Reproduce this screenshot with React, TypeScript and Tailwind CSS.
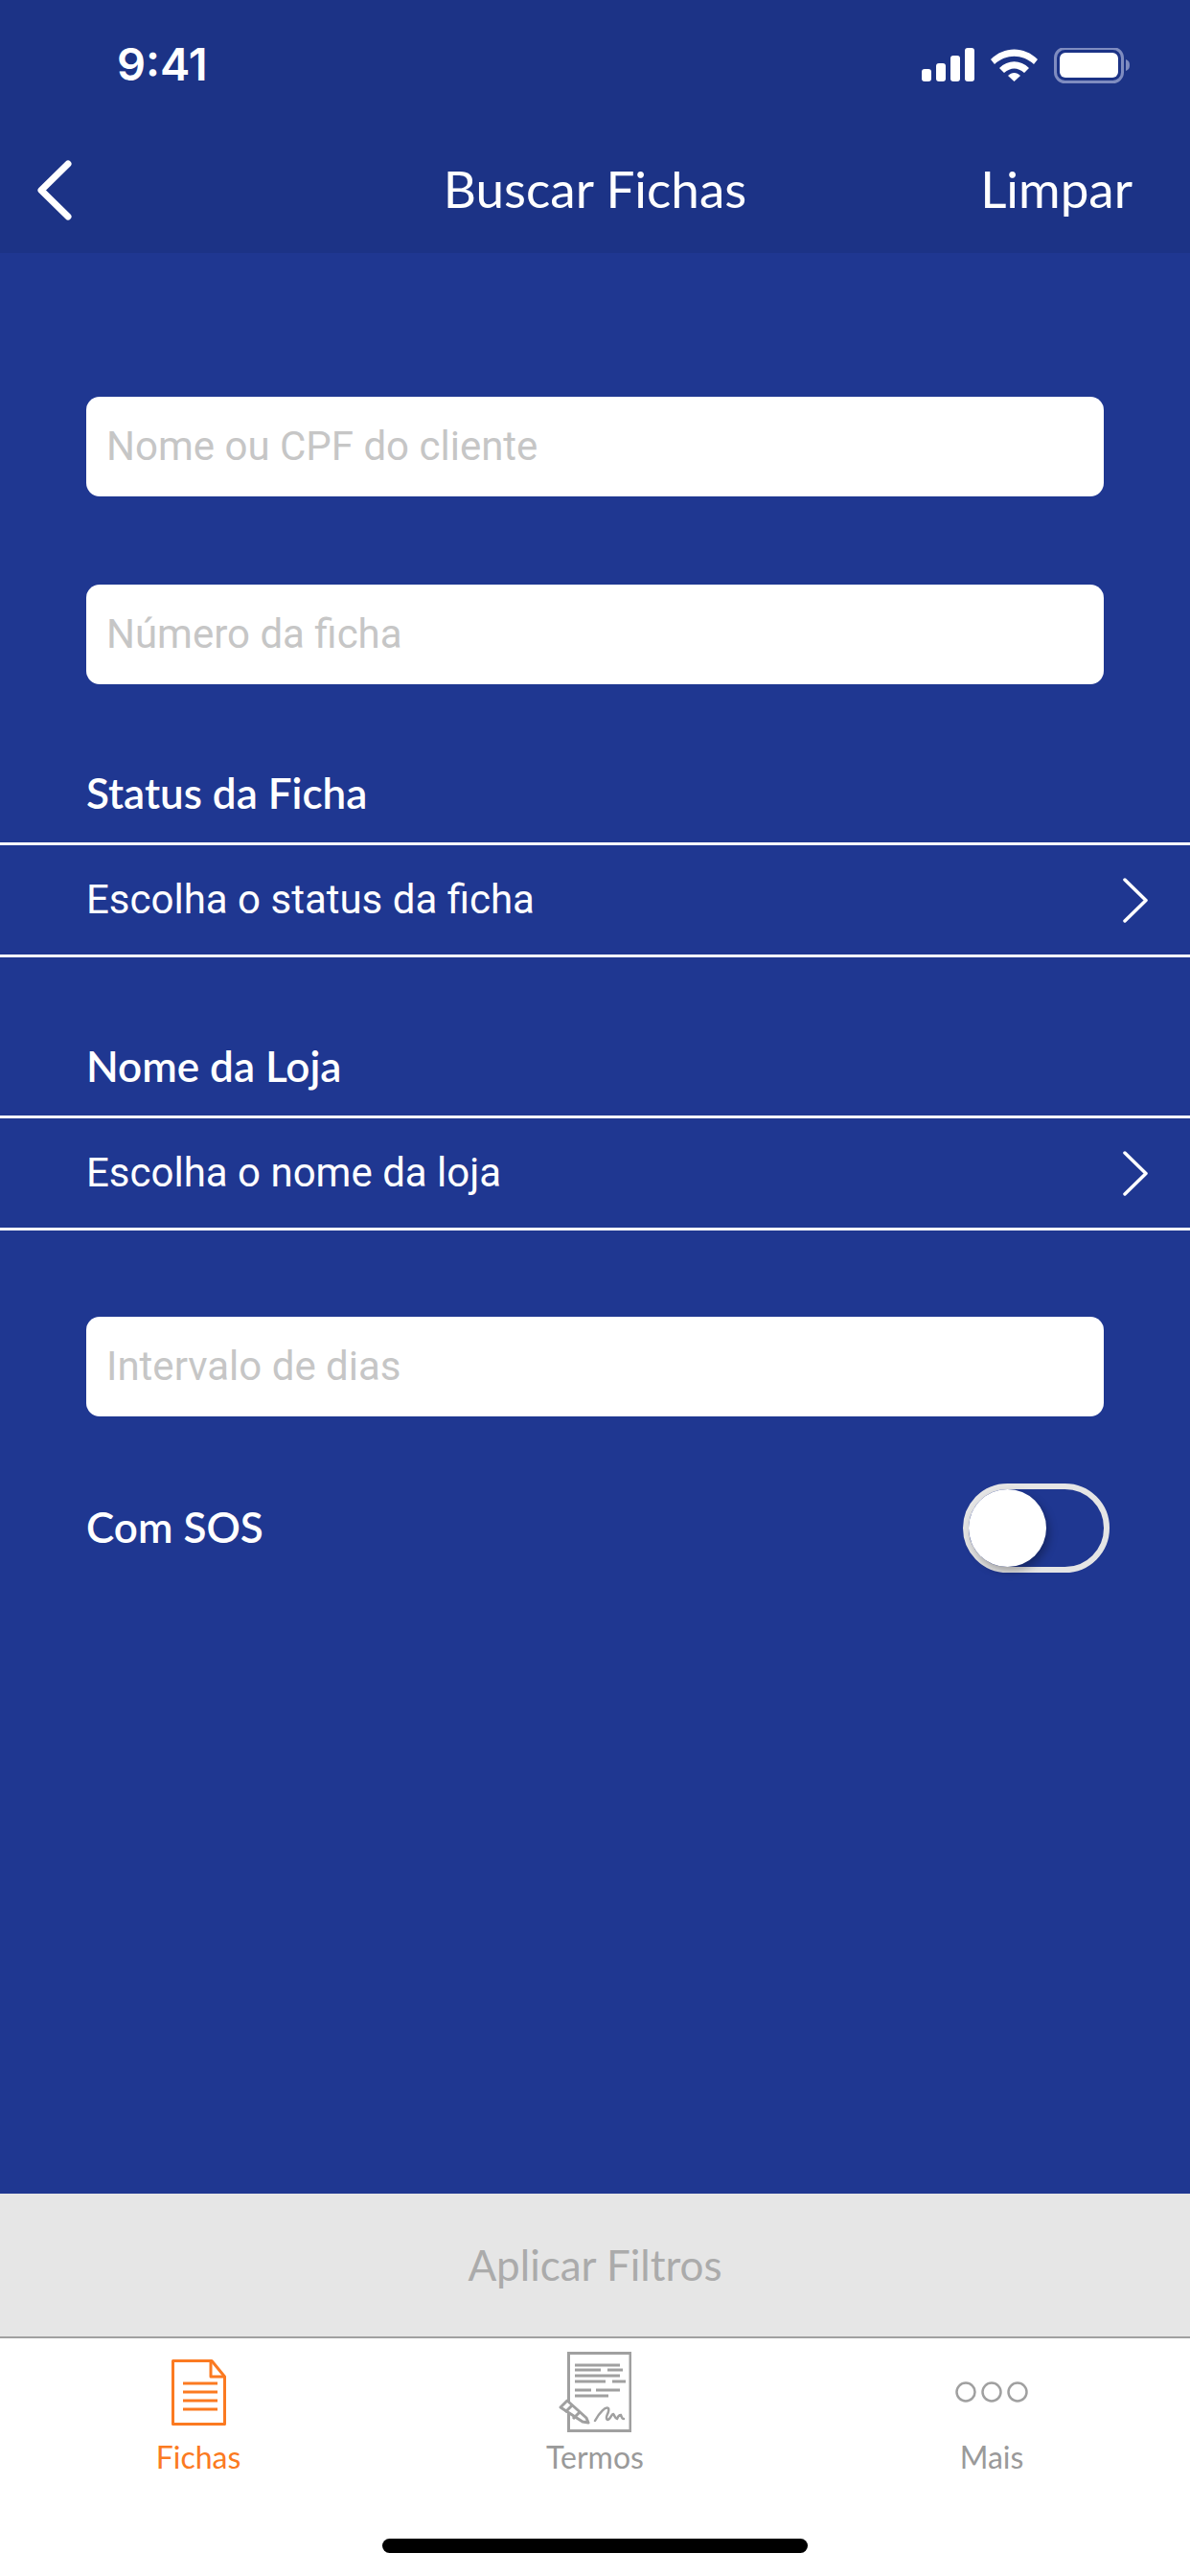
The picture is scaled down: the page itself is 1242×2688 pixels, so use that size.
// ─── Status bar ───────────────────────────────────────────────────────────────

function StatusIcons() {
	return (
		<svg width="220" height="40" viewBox="0 0 220 40" fill="none" className="shrink-0">
			<rect x="0" y="22" width="10" height="13" rx="3" fill="#fff" />
			<rect x="15" y="16" width="10" height="19" rx="3" fill="#fff" />
			<rect x="30" y="8" width="10" height="27" rx="3" fill="#fff" />
			<rect x="45" y="0" width="10" height="35" rx="3" fill="#fff" />
			<path d="M72 12 C86 -2 107 -2 121 12 L117 17 C105 6 88 6 76 17 Z" fill="#fff" />
			<path d="M81 21 C90 12 103 12 112 21 L107 26 C100 20 93 20 86 26 Z" fill="#fff" />
			<path d="M90 29 C94 25 99 25 103 29 L96.500 35 Z" fill="#fff" />
			<rect x="139.500" y="0.500" width="70" height="35" rx="10" stroke="#7f8cc0" strokeWidth="3" />
			<rect x="144" y="5" width="61" height="26" rx="6" fill="#fff" />
			<path d="M213 12 C216 13 217 15 217 18 C217 21 216 23 213 24 Z" fill="#7f8cc0" />
		</svg>
	);
}

// ─── Form pieces ──────────────────────────────────────────────────────────────

function TextField({ placeholder, className }: { placeholder: string; className: string }) {
	return (
		<input
			type="text"
			placeholder={placeholder}
			className={`block mx-[90px] w-[1062px] h-[104px] shrink-0 rounded-[14px] bg-white pl-[21px] pr-[21px] pb-[2px] font-['Roboto',sans-serif] text-[42px] text-gray-800 outline-none placeholder:text-[#c6c6c6] ${className}`}
		/>
	);
}

function PickerRow({ label, value, className }: { label: string; value: string; className: string }) {
	return (
		<section className={className}>
			<h2 className="h-[64px] px-[90px] flex items-center font-['Lato',sans-serif] font-semibold text-[44px] text-white">
				{label}
			</h2>
			<div className="mt-[20px] h-[120px] flex items-center justify-between border-y-[3px] border-white pl-[90px] pr-[43px]">
				<span className="pb-[2px] font-['Roboto',sans-serif] text-[42px] text-white">{value}</span>
				<svg width="27" height="47" viewBox="0 0 27 47" fill="none">
					<path d="M2 2 L24 23.500 L2 45" stroke="#fff" strokeWidth="3.500" strokeLinecap="round" strokeLinejoin="round" />
				</svg>
			</div>
		</section>
	);
}

// ─── Tab bar icons ────────────────────────────────────────────────────────────

function FichasIcon() {
	return (
		<svg width="57" height="69" viewBox="0 0 57 69" fill="none" stroke="#fb7a21" strokeWidth="3">
			<path d="M1.500 1.500 H42 L55.500 18 V67.500 H1.500 Z" strokeLinejoin="round" />
			<path d="M41 1.500 V18 H55.500" strokeLinejoin="round" />
			<path d="M12 25 H48 M12 34 H48 M12 43 H48 M12 52 H48" />
		</svg>
	);
}

function TermosIcon() {
	return (
		<svg width="76" height="84" viewBox="0 0 76 84" fill="none" stroke="#a0a0a0" strokeWidth="3">
			<path d="M10.500 1.500 H75 V82.500 H10.500 Z" />
			<path d="M17 14 H64 M17 19 H44 M51 19 H67 M17 25 H64 M17 31 H49 M56 31 H70 M17 40 H34 M39 40 H64 M17 46 H52" />
			<path d="M2 58 L9 51 L29 69 L31 74 L25 73 Z" fill="#fff" strokeLinejoin="round" />
			<path d="M7 63 L14 56 M15 70 L22 63" />
			<path d="M38 72 C43 63 49 57 52 59 C54 63 47 69 51 71 C54 71 55 65 57 65 C59 67 59 70 61 70 C62 67 63 66 65 66 C66 68 66 70 68 70" strokeWidth="2.500" strokeLinecap="round" />
		</svg>
	);
}

function MaisIcon() {
	return (
		<svg width="76" height="22" viewBox="0 0 76 22" fill="none" stroke="#a0a0a0" strokeWidth="2.500">
			<circle cx="11" cy="11" r="9.500" />
			<circle cx="38" cy="11" r="9.500" />
			<circle cx="65" cy="11" r="9.500" />
		</svg>
	);
}

function Tab({ label, active, children }: { label: string; active?: boolean; children: React.ReactNode }) {
	return (
		<div className="w-[414px] flex flex-col items-center">
			<div className="h-[106px] pt-[6px] flex items-center justify-center">{children}</div>
			<span className={`font-['Lato',sans-serif] text-[32px] leading-[36px] ${active ? 'text-[#fb7a21]' : 'text-[#9a9a9a]'}`}>
				{label}
			</span>
		</div>
	);
}

// ─── Page ─────────────────────────────────────────────────────────────────────

export default function App() {
	return (
		<div className="w-[1242px] h-[2688px] flex flex-col bg-[#1f3791] overflow-hidden">
			<header className="h-[264px] shrink-0 bg-[#1c3386]">
				<div className="h-[134px] flex items-start justify-between pt-[44px] pl-[122px] pr-[60px]">
					<span className="font-['Inter',sans-serif] font-semibold text-[47px] leading-[46px] text-white">9:41</span>
					<div className="pt-[6px]"><StatusIcons /></div>
				</div>
				<div className="relative h-[130px] flex items-start justify-center">
					<button type="button" aria-label="Voltar" className="absolute left-[38px] top-[33px]">
						<svg width="37" height="63" viewBox="0 0 37 63" fill="none">
							<path d="M33 4 L5 31.500 L33 59" stroke="#fff" strokeWidth="7" strokeLinecap="round" strokeLinejoin="round" />
						</svg>
					</button>
					<h1 className="pt-[33px] font-['Lato',sans-serif] text-[53px] leading-[60px] text-white">Buscar Fichas</h1>
					<span className="absolute right-[60px] top-[33px] font-['Lato',sans-serif] text-[53px] leading-[60px] text-white">Limpar</span>
				</div>
			</header>

			<main className="flex-1 flex flex-col pt-[150px]">
				<TextField placeholder="Nome ou CPF do cliente" className="" />
				<TextField placeholder="Número da ficha" className="mt-[92px]" />
				<PickerRow label="Status da Ficha" value="Escolha o status da ficha" className="mt-[81px]" />
				<PickerRow label="Nome da Loja" value="Escolha o nome da loja" className="mt-[81px]" />
				<TextField placeholder="Intervalo de dias" className="mt-[90px]" />
				<div className="mt-[70px] pl-[90px] pr-[84px] flex items-center justify-between">
					<span className="pb-[4px] font-['Lato',sans-serif] font-semibold text-[44px] text-white">Com SOS</span>
					<div className="w-[153px] h-[93px] rounded-full border-[6px] border-[#e5e5e5]">
						<div className="w-[81px] h-[81px] rounded-full bg-white shadow-[3px_5px_10px_rgba(0,0,0,0.3)]" />
					</div>
				</div>
			</main>

			<button type="button" className="h-[149px] pb-[2px] shrink-0 bg-[#e6e6e6] font-['Lato',sans-serif] text-[44px] text-[#ababab]">
				Aplicar Filtros
			</button>
			<nav className="h-[250px] shrink-0 bg-white border-t-2 border-[#a0a0a0] flex flex-col">
				<div className="flex">
					<Tab label="Fichas" active><FichasIcon /></Tab>
					<Tab label="Termos"><TermosIcon /></Tab>
					<Tab label="Mais"><MaisIcon /></Tab>
				</div>
				<div className="mt-[67px] mx-auto w-[444px] h-[15px] rounded-full bg-black" />
			</nav>
		</div>
	);
}
